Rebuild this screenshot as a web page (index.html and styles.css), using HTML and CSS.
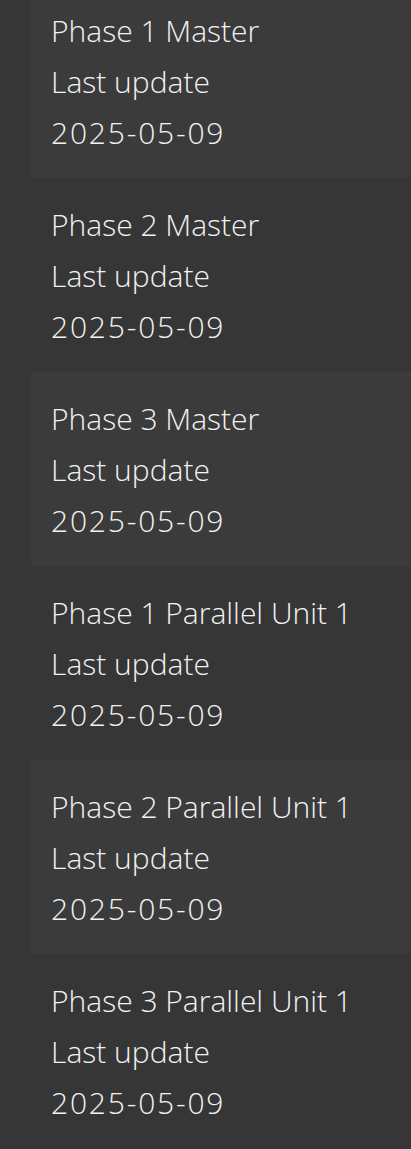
FILE: index.html
```html
<!DOCTYPE html>
<html>
<head>
<meta charset="utf-8">
<link rel="stylesheet" href="styles.css">
</head>
<body>
<ul class="list">
  <li class="item alt"><div class="line">Phase 1 Master</div><div class="line">Last update</div><div class="line date">2025-05-09</div></li>
  <li class="item"><div class="line">Phase 2 Master</div><div class="line">Last update</div><div class="line date">2025-05-09</div></li>
  <li class="item alt"><div class="line">Phase 3 Master</div><div class="line">Last update</div><div class="line date">2025-05-09</div></li>
  <li class="item"><div class="line">Phase 1 Parallel Unit 1</div><div class="line">Last update</div><div class="line date">2025-05-09</div></li>
  <li class="item alt"><div class="line">Phase 2 Parallel Unit 1</div><div class="line">Last update</div><div class="line date">2025-05-09</div></li>
  <li class="item"><div class="line">Phase 3 Parallel Unit 1</div><div class="line">Last update</div><div class="line date">2025-05-09</div></li>
</ul>
</body>
</html>
```
FILE: styles.css
```css
html, body {
  margin: 0;
  padding: 0;
  background: #363636;
  overflow: hidden;
}
body {
  height: 1149px;
}
.list {
  list-style: none;
  margin: -16px 0 0 31px;
  padding: 0;
  display: flex;
  flex-direction: column;
}
.item {
  height: 194px;
  box-sizing: border-box;
  padding: 21px 0 20px 20px;
  color: #f2f2f2;
  font-family: "Open Sans", sans-serif;
  font-weight: 300;
  font-size: 30px;
}
.item.alt {
  background: #3b3b3b;
}
.line {
  line-height: 51px;
  height: 51px;
  white-space: nowrap;
}
.date {
  letter-spacing: 1.8px;
}
```
